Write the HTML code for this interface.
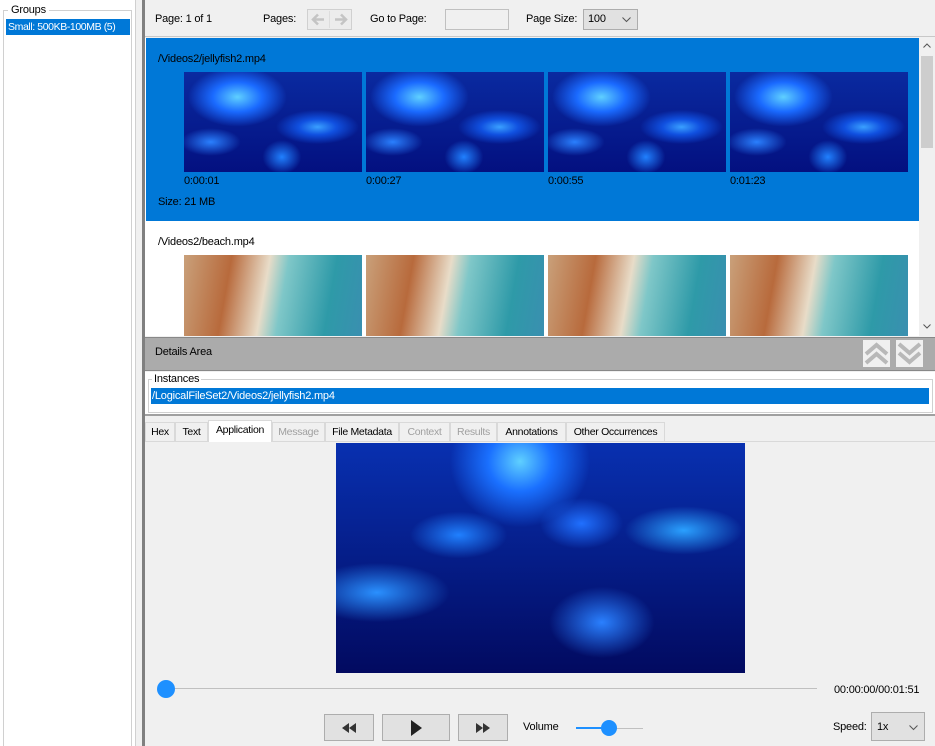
<!DOCTYPE html>
<html><head><style>
*{box-sizing:border-box;margin:0;padding:0}
body{width:935px;height:746px;overflow:hidden;background:#f0f0f0;font-family:"Liberation Sans",sans-serif;font-size:11px;color:#000;position:relative;letter-spacing:-0.2px;white-space:nowrap}
.a{position:absolute}
.jf{background:radial-gradient(ellipse at 30% 25%,#5fd0ff 0,#1a6aff 14%,transparent 28%),radial-gradient(ellipse at 75% 55%,#3aa0ff 0,#1050e0 10%,transparent 22%),radial-gradient(ellipse at 15% 70%,#2a80ff 0,transparent 14%),radial-gradient(ellipse at 55% 85%,#2080ff 0,transparent 14%),linear-gradient(#0a2aa0,#031080)}
.bc{background:linear-gradient(100deg,#c9a07a 0,#b86a3c 25%,#e8dcc8 45%,#7fc7c8 55%,#2e9aa8 80%,#3a8fb0 100%)}
.btn{background:#e1e1e1;border:1px solid #adadad;display:flex;align-items:center;justify-content:center}
.tab{position:absolute;top:422px;height:19px;border:1px solid #d9d9d9;border-bottom:none;padding:3px 0 0 0;text-align:center;background:#f0f0f0;font-size:10.5px;letter-spacing:-0.3px}
</style></head><body>
<div class="a" style="left:0;top:0;width:136px;height:746px;background:#fff;border-right:1px solid #d0d0d0"></div>
<div class="a" style="left:3px;top:10px;width:129px;height:736px;border:1px solid #d0d0d0;border-bottom:none"></div>
<div class="a" style="left:8px;top:4px;background:#fff;padding:0 3px">Groups</div>
<div class="a" style="left:6px;top:19px;width:124px;height:16px;background:#0078d7;color:#fff;padding:2px 0 0 2px;letter-spacing:-0.4px;font-size:10.5px">Small: 500KB-100MB (5)</div>
<div class="a" style="left:142px;top:0;width:3px;height:746px;background:#808080"></div>
<div class="a" style="left:145px;top:0;width:790px;height:37px;border-bottom:1px solid #c8c8c8"></div>
<div class="a" style="left:155px;top:13px">Page: 1 of 1</div>
<div class="a" style="left:263px;top:13px">Pages:</div>
<div class="a" style="left:307px;top:9px;width:45px;height:21px;border:1px solid #d0d0d0;background:#ececec">
<svg width="43" height="19"><g stroke="#c4c4c4" stroke-width="2.5" fill="none"><path d="M16 9.5H5M10 4.5L5 9.5L10 14.5"/><path d="M27 9.5H38M33 4.5L38 9.5L33 14.5"/></g><path d="M21.5 1V18" stroke="#ddd"/></svg></div>
<div class="a" style="left:370px;top:13px">Go to Page:</div>
<div class="a" style="left:445px;top:9px;width:64px;height:21px;border:1px solid #c0c0c0;background:#f0f0f0"></div>
<div class="a" style="left:526px;top:13px">Page Size:</div>
<div class="a" style="left:583px;top:9px;width:55px;height:21px;border:1px solid #adadad;background:#e1e1e1;padding:3px 0 0 4px">100<svg class="a" style="right:6px;top:7px" width="9" height="6"><path d="M0.5 0.5L4.5 4.5L8.5 0.5" stroke="#555" fill="none"/></svg></div>
<div class="a" style="left:145px;top:38px;width:790px;height:298px;background:#fff"></div>
<div class="a" style="left:146px;top:38px;width:773px;height:183px;background:#0078d7"></div>
<div class="a" style="left:158px;top:53px">/Videos2/jellyfish2.mp4</div>
<div class="a jf" style="left:184px;top:72px;width:178px;height:100px"></div>
<div class="a jf" style="left:366px;top:72px;width:178px;height:100px"></div>
<div class="a jf" style="left:548px;top:72px;width:178px;height:100px"></div>
<div class="a jf" style="left:730px;top:72px;width:178px;height:100px"></div>
<div class="a" style="left:184px;top:175px">0:00:01</div>
<div class="a" style="left:366px;top:175px">0:00:27</div>
<div class="a" style="left:548px;top:175px">0:00:55</div>
<div class="a" style="left:730px;top:175px">0:01:23</div>
<div class="a" style="left:158px;top:196px">Size: 21 MB</div>
<div class="a" style="left:158px;top:236px">/Videos2/beach.mp4</div>
<div class="a bc" style="left:184px;top:255px;width:178px;height:81px"></div>
<div class="a bc" style="left:366px;top:255px;width:178px;height:81px"></div>
<div class="a bc" style="left:548px;top:255px;width:178px;height:81px"></div>
<div class="a bc" style="left:730px;top:255px;width:178px;height:81px"></div>
<div class="a" style="left:919px;top:38px;width:16px;height:298px;background:#f0f0f0"></div>
<div class="a" style="left:921px;top:56px;width:12px;height:92px;background:#cdcdcd"></div>
<svg class="a" style="left:923px;top:43px" width="8" height="5"><path d="M0.5 4.5L4 1L7.5 4.5" stroke="#555" fill="none"/></svg>
<svg class="a" style="left:923px;top:324px" width="8" height="5"><path d="M0.5 0.5L4 4L7.5 0.5" stroke="#555" fill="none"/></svg>
<div class="a" style="left:145px;top:337px;width:790px;height:34px;background:#ababab;border-top:1px solid #888;border-bottom:1px solid #888"></div>
<div class="a" style="left:155px;top:346px">Details Area</div>
<svg class="a" style="left:863px;top:340px" width="27" height="27"><rect width="27" height="27" fill="#f0f0f0"/><g fill="none" stroke="#b8b8b8" stroke-width="4"><path d="M3 14L13.5 5L24 14"/><path d="M3 23L13.5 14L24 23"/></g></svg>
<svg class="a" style="left:896px;top:340px" width="27" height="27"><rect width="27" height="27" fill="#f0f0f0"/><g fill="none" stroke="#b8b8b8" stroke-width="4"><path d="M3 4L13.5 13L24 4"/><path d="M3 13L13.5 22L24 13"/></g></svg>
<div class="a" style="left:145px;top:372px;width:790px;height:44px;background:#fff;border-bottom:2px solid #a0a0a0"></div>
<div class="a" style="left:148px;top:379px;width:785px;height:34px;border:1px solid #d0d0d0"></div>
<div class="a" style="left:152px;top:373px;background:#fff;padding:0 2px">Instances</div>
<div class="a" style="left:151px;top:388px;width:778px;height:16px;background:#0078d7;color:#fff;padding:2px 0 0 1px">/LogicalFileSet2/Videos2/jellyfish2.mp4</div>
<div class="a" style="left:145px;top:441px;width:790px;height:1px;background:#d9d9d9"></div>
<div class="tab" style="left:145px;width:30px">Hex</div>
<div class="tab" style="left:175px;width:33px">Text</div>
<div class="tab" style="left:208px;top:420px;height:22px;width:64px;background:#fff">Application</div>
<div class="tab" style="left:272px;width:53px;color:#a0a0a0">Message</div>
<div class="tab" style="left:325px;width:74px">File Metadata</div>
<div class="tab" style="left:399px;width:51px;color:#a0a0a0">Context</div>
<div class="tab" style="left:450px;width:47px;color:#a0a0a0">Results</div>
<div class="tab" style="left:497px;width:69px">Annotations</div>
<div class="tab" style="left:566px;width:99px">Other Occurrences</div>
<div class="a" style="left:336px;top:443px;width:409px;height:230px;background:radial-gradient(ellipse at 45% 8%,#5fd0ff 0,#1a70ff 10%,transparent 22%),radial-gradient(ellipse at 85% 38%,#2aa0ff 0,transparent 12%),radial-gradient(ellipse at 10% 65%,#2a90ff 0,transparent 14%),radial-gradient(ellipse at 30% 40%,#2080ff 0,transparent 12%),radial-gradient(ellipse at 65% 78%,#2a80ff 0,transparent 14%),radial-gradient(ellipse at 60% 35%,#2070ff 0,transparent 12%),linear-gradient(#0830b0,#020a60)"></div>
<div class="a" style="left:166px;top:688px;width:651px;height:1px;background:#c0c0c0"></div>
<div class="a" style="left:157px;top:680px;width:18px;height:18px;border-radius:50%;background:#1e90ff"></div>
<div class="a" style="left:834px;top:684px">00:00:00/00:01:51</div>
<div class="a btn" style="left:324px;top:714px;width:50px;height:27px"><svg width="14" height="10"><path d="M7 0L0 5L7 10ZM14 0L7 5L14 10Z" fill="#333"/></svg></div>
<div class="a btn" style="left:382px;top:714px;width:68px;height:27px"><svg width="12" height="16"><path d="M1 0L12 8L1 16Z" fill="#222"/></svg></div>
<div class="a btn" style="left:458px;top:714px;width:50px;height:27px"><svg width="14" height="10"><path d="M0 0L7 5L0 10ZM7 0L14 5L7 10Z" fill="#333"/></svg></div>
<div class="a" style="left:523px;top:721px">Volume</div>
<div class="a" style="left:603px;top:728px;width:40px;height:1px;background:#c0c0c0"></div>
<div class="a" style="left:576px;top:727px;width:30px;height:2px;background:#1e90ff"></div>
<div class="a" style="left:601px;top:720px;width:16px;height:16px;border-radius:50%;background:#1e90ff"></div>
<div class="a" style="left:833px;top:721px">Speed:</div>
<div class="a" style="left:871px;top:712px;width:54px;height:29px;border:1px solid #adadad;background:#e1e1e1;padding:8px 0 0 5px">1x<svg class="a" style="right:6px;top:12px" width="9" height="6"><path d="M0.5 0.5L4.5 4.5L8.5 0.5" stroke="#555" fill="none"/></svg></div>
</body></html>
